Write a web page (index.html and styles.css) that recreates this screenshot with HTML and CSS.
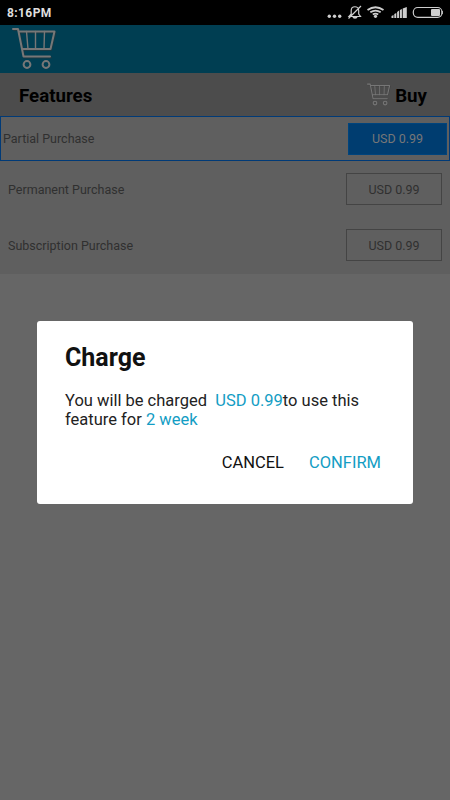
FILE: index.html
```
<!DOCTYPE html>
<html lang="en">
<head>
<meta charset="utf-8">
<title>Charge</title>
<link rel="stylesheet" href="styles.css">
</head>
<body>
<svg class="defs" aria-hidden="true">
  <symbol id="cart" viewBox="0 0 45 43">
    <path class="shade" d="M2 3h5l5.500 27.500h26.500M9 5.500h34.500l-4.500 17.500h-27"/>
    <path d="M1 2h5l5.500 27.500h26.500M8 4.500h34.500l-4 17.500h-28"/>
    <path class="thin" d="M14.500 4.500l1.500 17.500M23.500 4.500v17.500M32.500 4.500l-.5 17.500"/>
    <circle cx="15" cy="37.500" r="3.400"/>
    <circle cx="34" cy="37.500" r="3.400"/>
  </symbol>
</svg>
<div class="screen">
  <header class="status">
    <span>8:16PM</span>
    <svg class="status-icons" width="120" height="25" viewBox="0 0 120 25">
      <g fill="#cecece">
        <circle cx="5.300" cy="16.200" r="1.700"/><circle cx="10.500" cy="16.200" r="1.700"/><circle cx="15.700" cy="16.200" r="1.700"/>
        <path d="M28.500 17h5a2.500 1.700 0 0 1-5 0z"/>
        <circle cx="51.500" cy="16.300" r="1.600"/>
        <path d="M67.500 18v-2l2-1v3zM70.300 18v-4l2-1v5zM73.100 18v-6l2-1.500V18zM75.900 18v-8l2-1v9zM78.700 18V8.500L82.800 7v11z"/>
        <rect x="107" y="9" width="9" height="7" rx="1"/>
        <rect x="117.600" y="11" width="1.200" height="3"/>
      </g>
      <g fill="none" stroke="#cecece" stroke-width="1.200">
        <path d="M25 16.500h11.500l-1.800-2.500V10.500c0-5-7.500-5-7.500 0V14zM24.500 18.500L37 6"/>
        <path stroke-width="1.800" d="M43.500 10q8-5.500 16 0M46.300 12.300q5.200-3.500 10.400 0M48.800 14.500q2.700-1.700 5.400 0"/>
        <rect x="89.300" y="7.500" width="28.700" height="9.800" rx="4.500"/>
      </g>
    </svg>
  </header>
  <div class="appbar"><svg class="cart cart-large"><use href="#cart"/></svg></div>
  <div class="heading">
    <h2>Features</h2>
    <div class="buy"><svg class="cart cart-small"><use href="#cart"/></svg><h2>Buy</h2></div>
  </div>
  <ul class="list">
    <li class="row selected"><span>Partial Purchase</span><button>USD 0.99</button></li>
    <li class="row"><span>Permanent Purchase</span><button>USD 0.99</button></li>
    <li class="row"><span>Subscription Purchase</span><button>USD 0.99</button></li>
  </ul>
  <section class="dialog" role="dialog">
    <h1>Charge</h1>
    <p>You will be charged&nbsp; <em>USD 0.99</em>to use this<br>feature for <em>2 week</em></p>
    <div class="actions"><button>CANCEL</button><button class="confirm">CONFIRM</button></div>
  </section>
</div>
</body>
</html>
```
FILE: styles.css
```
* { box-sizing: border-box; margin: 0; padding: 0; }
body { font-family: Roboto, sans-serif; background: #666; }
button { font: inherit; color: inherit; background: none; border: 0; }
.defs { position: absolute; width: 0; height: 0; }
.screen { position: relative; width: 450px; height: 800px; overflow: hidden; }
.status {
  height: 25px; padding: 0 6px 0 7px; background: #000; color: #dedede;
  display: flex; align-items: center; justify-content: space-between;
  font-size: 12px; font-weight: 700; letter-spacing: .4px;
}
.appbar { height: 48px; background: #003e52; padding: 2px 0 0 12px; }
.cart { display: block; fill: none; stroke: #777; stroke-width: 2; stroke-linejoin: round; stroke-linecap: round; }
.shade { stroke: #333; stroke-opacity: .5; }
.thin { stroke-width: 1.4; }
.cart-large { width: 45px; height: 43px; }
.cart-small { width: 24px; height: 23px; }
.heading {
  height: 43px; background: #4c4c4c; color: #000;
  padding: 2px 23px 0 19px;
  display: flex; align-items: center; justify-content: space-between;
}
.heading h2 { font-size: 18.700px; line-height: 24px; font-weight: 700; }
.buy { display: flex; align-items: center; gap: 4px; }
.buy .cart { margin-top: -3px; }
.list { list-style: none; background: #5f5f5f; height: 158px; }
.row {
  height: 56px; padding: 0 8px 2px; color: #303030; font-size: 12.5px;
  display: flex; align-items: center; justify-content: space-between;
}
.row button { width: 96px; height: 32px; border: 1px solid #444; font-size: 12.5px; }
.row.selected { height: 45px; margin-bottom: 1px; padding: 0 2px; border: 1px solid #003a77; }
.row.selected button { width: 99px; background: #003d70; border-color: #00447d; color: #777; }
.dialog {
  position: absolute; left: 37px; top: 321px; width: 376px; height: 183px;
  padding: 22px 32px 0 28px; background: #fff; border-radius: 3px; color: #111;
}
.dialog h1 { font-size: 25px; line-height: 30px; font-weight: 700; }
.dialog p { margin-top: 18px; font-size: 16.500px; line-height: 19px; color: #222; white-space: nowrap; }
.dialog em { font-style: normal; color: #139dc4; }
.actions { display: flex; justify-content: flex-end; gap: 25px; margin-top: 24px; font-size: 16.500px; line-height: 20px; }
.confirm { color: #139dc4; }
```
